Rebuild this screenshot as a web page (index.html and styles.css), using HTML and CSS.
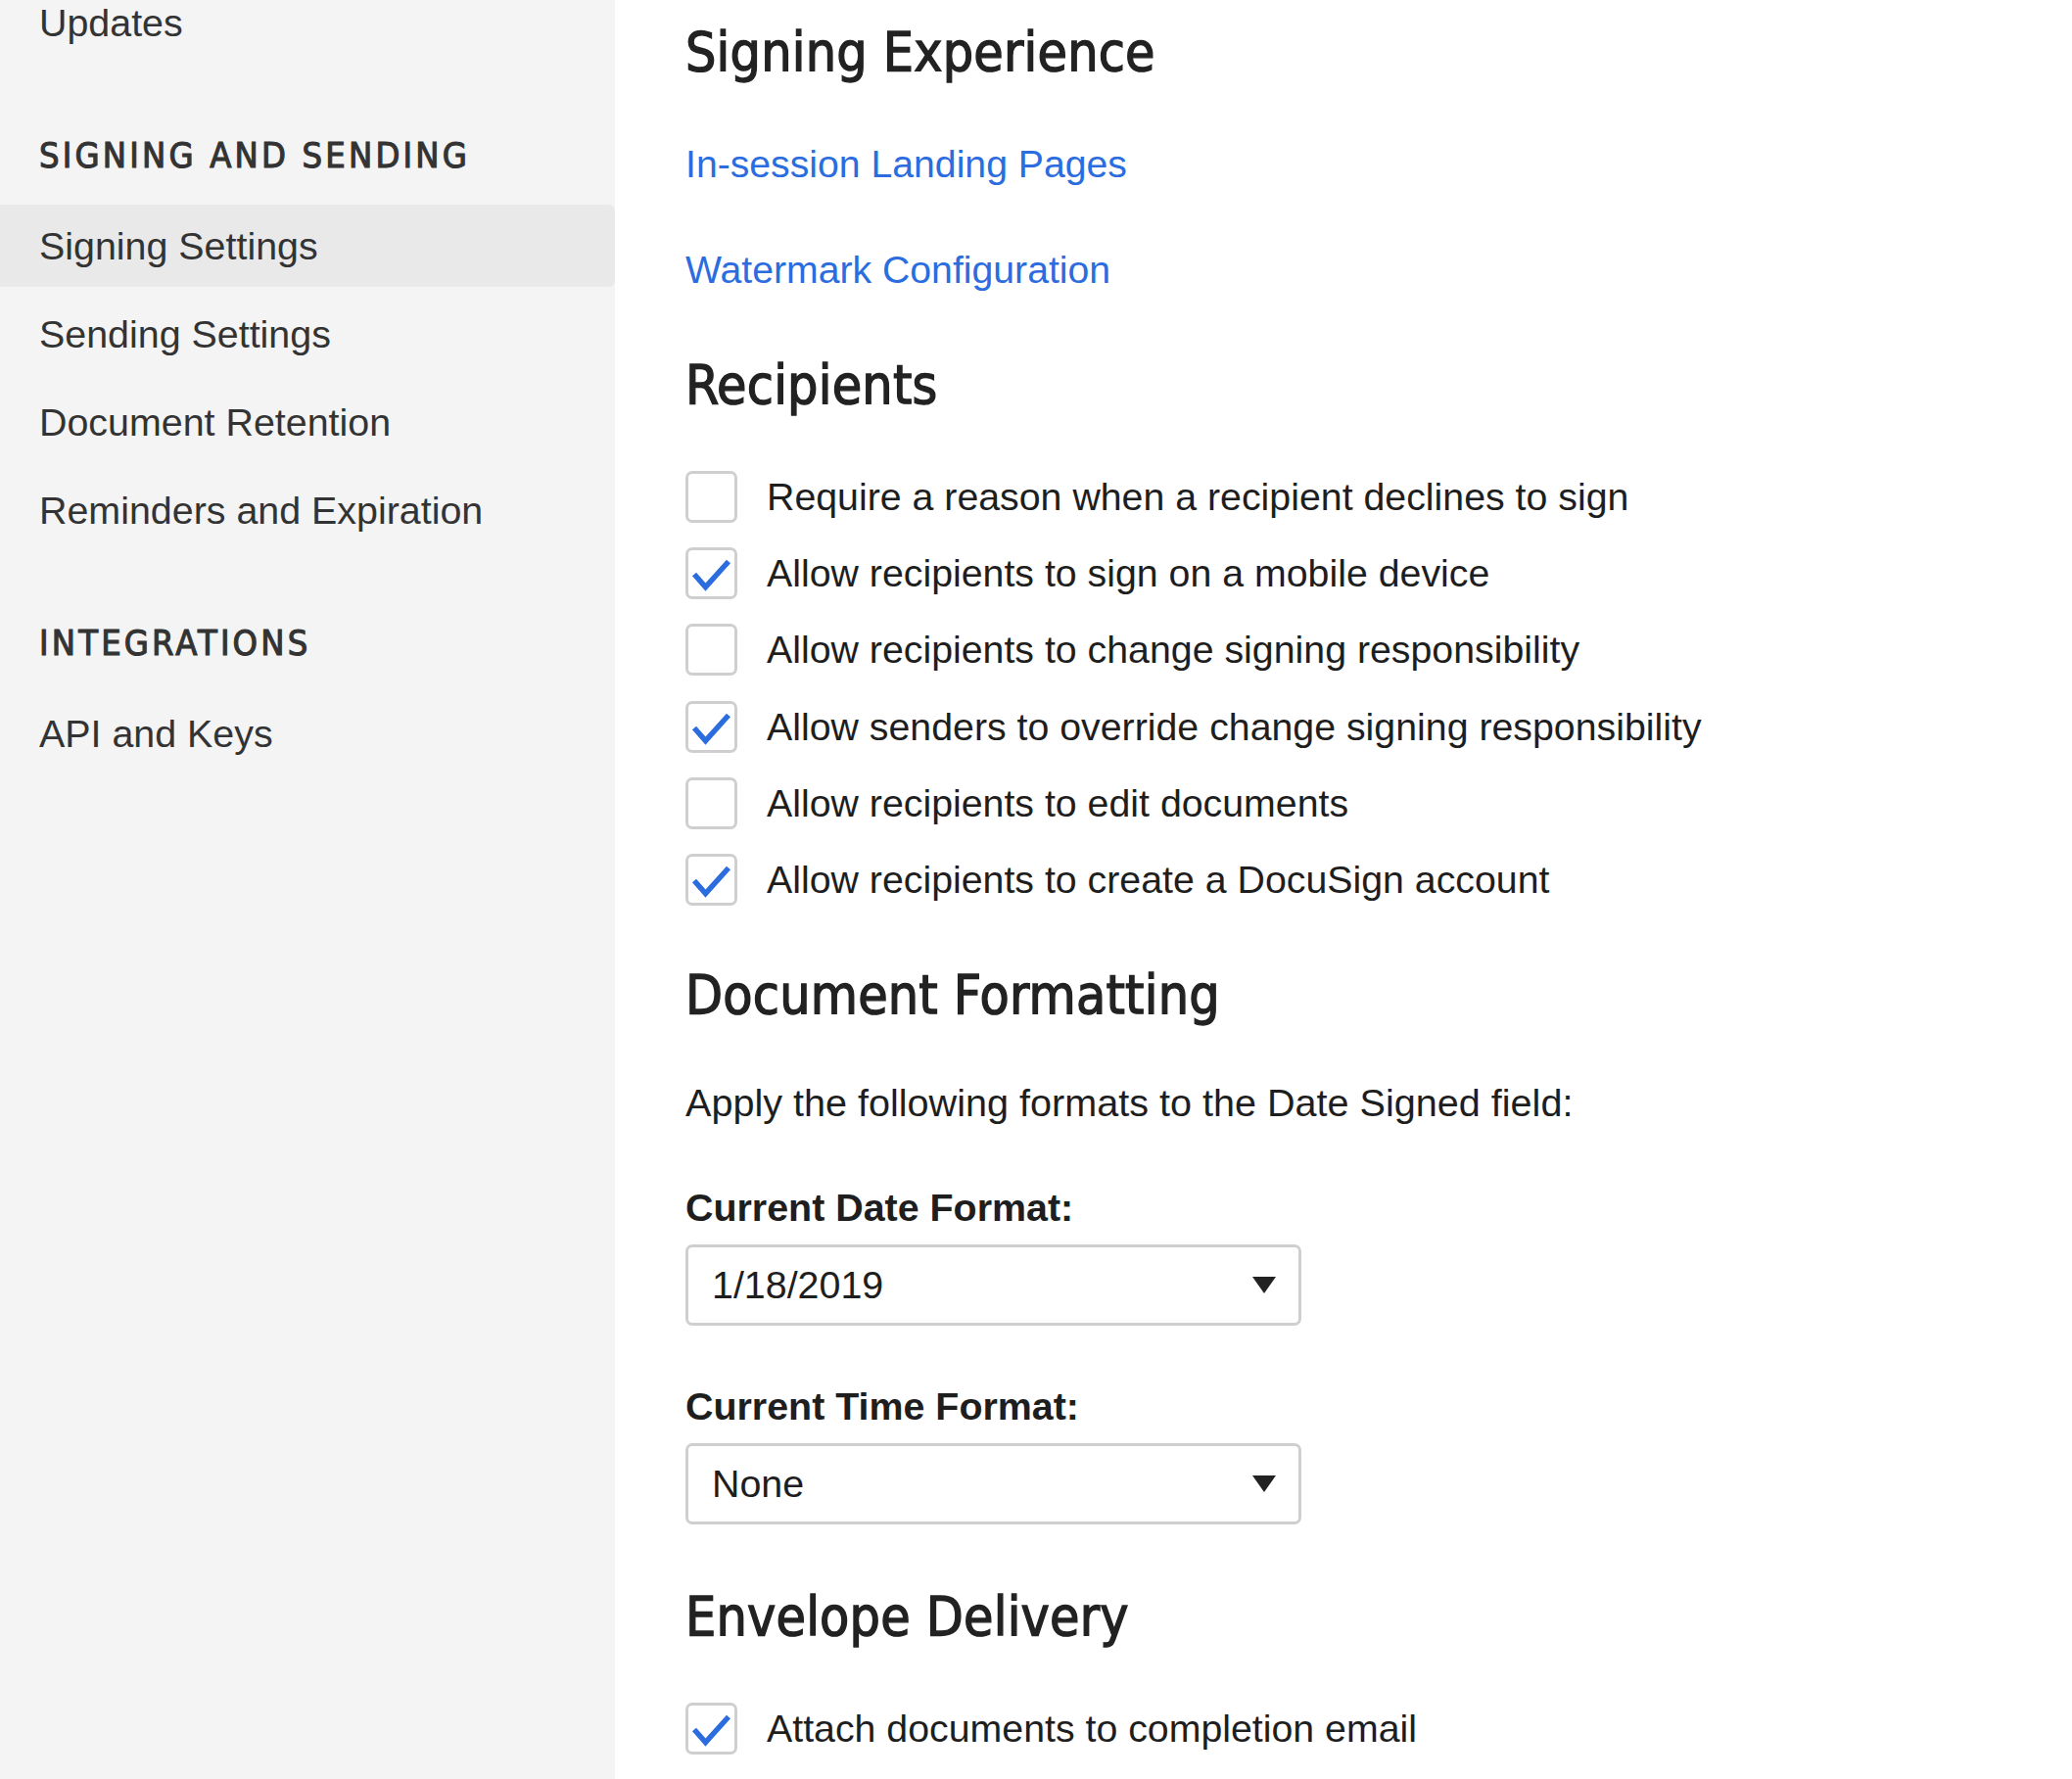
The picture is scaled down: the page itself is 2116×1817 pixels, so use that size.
FILE: index.html
```html
<!DOCTYPE html>
<html lang="en">
<head>
<meta charset="utf-8">
<title>Signing Settings</title>
<link rel="stylesheet" href="styles.css">
</head>
<body>
<div class="page">
  <aside class="sidebar">
    <nav class="nav">
      <a class="nav-item nav-first">Updates</a>
      <h3 class="nav-heading">SIGNING AND SENDING</h3>
      <a class="nav-item active">Signing Settings</a>
      <a class="nav-item">Sending Settings</a>
      <a class="nav-item">Document Retention</a>
      <a class="nav-item">Reminders and Expiration</a>
      <h3 class="nav-heading">INTEGRATIONS</h3>
      <a class="nav-item">API and Keys</a>
    </nav>
  </aside>
  <main class="content">
    <h2 class="section-title">Signing Experience</h2>
    <div class="links">
      <a class="link">In-session Landing Pages</a>
      <a class="link">Watermark Configuration</a>
    </div>

    <h2 class="section-title t-recipients">Recipients</h2>
    <div class="checklist">
      <div class="check-row"><span class="checkbox"></span><span class="check-label">Require a reason when a recipient declines to sign</span></div>
      <div class="check-row"><span class="checkbox"><svg viewBox="0 0 53 53" class="tick"><path d="M9 27.5 L20.5 40.5 L44 14.5"/></svg></span><span class="check-label">Allow recipients to sign on a mobile device</span></div>
      <div class="check-row"><span class="checkbox"></span><span class="check-label">Allow recipients to change signing responsibility</span></div>
      <div class="check-row"><span class="checkbox"><svg viewBox="0 0 53 53" class="tick"><path d="M9 27.5 L20.5 40.5 L44 14.5"/></svg></span><span class="check-label">Allow senders to override change signing responsibility</span></div>
      <div class="check-row"><span class="checkbox"></span><span class="check-label">Allow recipients to edit documents</span></div>
      <div class="check-row"><span class="checkbox"><svg viewBox="0 0 53 53" class="tick"><path d="M9 27.5 L20.5 40.5 L44 14.5"/></svg></span><span class="check-label">Allow recipients to create a DocuSign account</span></div>
    </div>

    <h2 class="section-title t-format">Document Formatting</h2>
    <p class="para">Apply the following formats to the Date Signed field:</p>
    <div class="field-label fl-date">Current Date Format:</div>
    <div class="select"><span>1/18/2019</span><span class="caret"></span></div>
    <div class="field-label fl-time">Current Time Format:</div>
    <div class="select"><span>None</span><span class="caret"></span></div>

    <h2 class="section-title t-delivery">Envelope Delivery</h2>
    <div class="checklist">
      <div class="check-row"><span class="checkbox"><svg viewBox="0 0 53 53" class="tick"><path d="M9 27.5 L20.5 40.5 L44 14.5"/></svg></span><span class="check-label">Attach documents to completion email</span></div>
    </div>
  </main>
</div>
</body>
</html>
```
FILE: styles.css
```css
html, body {
  margin: 0;
  padding: 0;
  background: #ffffff;
}

.page {
  display: flex;
  height: 1817px;
  overflow: hidden;
  font-family: "Liberation Sans", Arial, sans-serif;
  color: #1e1e1e;
}

.sidebar {
  width: 628px;
  flex-shrink: 0;
  background: #f4f4f4;
}

.nav {
  display: flex;
  flex-direction: column;
}

.nav-item {
  height: 84px;
  display: flex;
  align-items: center;
  padding-left: 40px;
  margin-bottom: 6px;
  font-size: 39.4px;
  color: #333333;
  border-radius: 0 6px 6px 0;
  text-decoration: none;
}

.nav-first {
  margin-top: -19px;
}

.nav-item.active {
  background: #e9e9e9;
}

.nav-heading {
  margin: 63px 0 25px 0;
  padding-left: 40px;
  height: 50px;
  line-height: 50px;
  font-family: "DejaVu Sans Condensed", "DejaVu Sans", sans-serif;
  font-weight: normal;
  font-size: 36px;
  letter-spacing: 3.2px;
  color: #333333;
  -webkit-text-stroke: 1.1px #333333;
}

.content {
  flex: 1;
  padding: 20px 0 0 72px;
}

.section-title {
  margin: 0;
  font-family: "DejaVu Sans Condensed", "DejaVu Sans", sans-serif;
  font-weight: normal;
  font-size: 55px;
  line-height: 66px;
  letter-spacing: 0.2px;
  color: #222222;
  -webkit-text-stroke: 1.3px #222222;
}

.links {
  display: flex;
  flex-direction: column;
  gap: 48px;
  margin-top: 52px;
}

.link {
  display: block;
  font-size: 39.2px;
  line-height: 60px;
  color: #2b6cdf;
  text-decoration: none;
}

.t-recipients { margin-top: 54px; }
.t-format { margin-top: 58.5px; }
.t-delivery { margin-top: 61.5px; }

.checklist {
  display: flex;
  flex-direction: column;
  gap: 25.2px;
  margin-top: 55px;
}

.check-row {
  display: flex;
  align-items: center;
  gap: 30px;
  height: 53px;
}

.checkbox {
  width: 53px;
  height: 53px;
  box-sizing: border-box;
  border: 3px solid #cfcfcf;
  border-radius: 7px;
  background: #ffffff;
  flex-shrink: 0;
  position: relative;
}

.tick {
  position: absolute;
  left: -3px;
  top: -3px;
  width: 53px;
  height: 53px;
}

.tick path {
  fill: none;
  stroke: #2b6cdf;
  stroke-width: 5.5;
  stroke-linejoin: miter;
}

.check-label {
  font-size: 39.3px;
  line-height: 53px;
  color: #1e1e1e;
}

.para {
  margin: 46.5px 0 0 0;
  font-size: 39.6px;
  line-height: 60px;
}

.field-label {
  font-size: 39.4px;
  line-height: 60px;
  font-weight: bold;
}

.fl-date { margin-top: 47px; }
.fl-time { margin-top: 52px; }

.select {
  margin-top: 8px;
  width: 629px;
  height: 83px;
  box-sizing: border-box;
  border: 3px solid #cfcfcf;
  border-radius: 7px;
  padding: 0 23px 0 24px;
  display: flex;
  align-items: center;
  justify-content: space-between;
  font-size: 39.4px;
  color: #1e1e1e;
}

.caret {
  width: 0;
  height: 0;
  border-left: 12px solid transparent;
  border-right: 12px solid transparent;
  border-top: 17px solid #222222;
}
```
